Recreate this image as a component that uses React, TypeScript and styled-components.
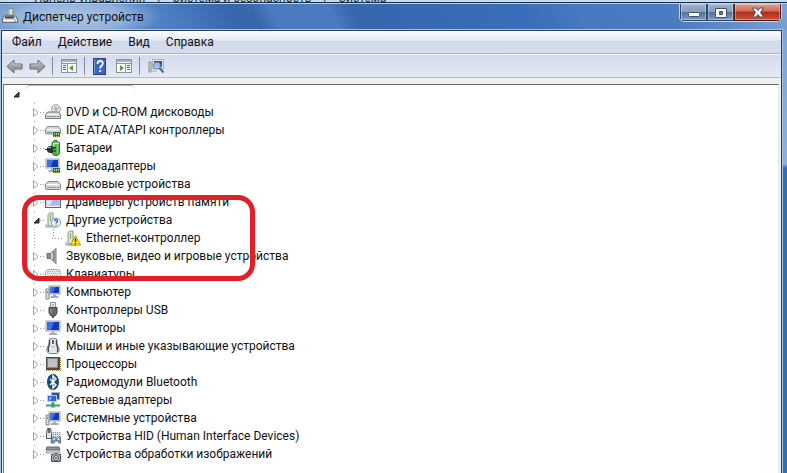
import React from "react";
import styled, { createGlobalStyle, css } from "styled-components";

const GlobalStyle = createGlobalStyle`
  * { box-sizing: border-box; }
  body {
    margin: 0;
    background: #3a6cb5;
    font-family: Roboto, "Noto Sans", sans-serif;
    font-size: 12px;
    color: #111;
  }
  button {
    font: inherit;
    color: inherit;
    border: 0;
    padding: 0;
    margin: 0;
    background: none;
  }
`;

const Desktop = styled.div`
  min-height: 100vh;
  display: flex;
  flex-direction: column;
`;

const BackStrip = styled.div`
  height: 3px;
  overflow: hidden;
  display: flex;
  align-items: flex-end;
  gap: 12px;
  padding-left: 34px;
  background: #c3dcf0;
  border-bottom: 1px solid #1b2c44;
  line-height: 8px;
  color: #233;
`;

const Window = styled.section`
  flex: 1;
  display: flex;
  flex-direction: column;
  padding: 0 5px 0 1px;
  border-top: 1px solid #b5d3f0;
  background: linear-gradient(180deg, #7ba0d3 0, #8fb0dc 160px, #3a6cb5 164px);
`;

const TitleBar = styled.header`
  height: 26px;
  margin: 0 -5px 0 -1px;
  padding: 0 5px 0 2px;
  display: flex;
  align-items: flex-start;
  background:
    radial-gradient(ellipse 90px 24px at 72px 13px, #b9cfebdd 0, #a4bfe3bb 60%, #a4bfe300 100%),
    linear-gradient(62deg, #6f97cf 0, #4f80c4 150px, #3967ac 210px, #3967ac 232px, #4a7ac0 248px, #4a7ac0 300px, #3766ae 320px, #3a6db9 470px, #4878c0 520px, #4b7bc2 600px, #7aa0d4 700px);
`;

const TitleIcon = styled.span`
  width: 20px;
  height: 24px;
  display: flex;
  align-items: center;
`;

const Title = styled.h1`
  flex: 1;
  margin: 0;
  font-size: 12px;
  font-weight: 400;
  line-height: 26px;
  padding-left: 1px;
`;

const WindowButtons = styled.div`
  display: flex;
  height: 18px;
  border: 1px solid #c8d9ee;
  border-top: 0;
  border-radius: 0 0 5px 5px;
  overflow: hidden;
`;

const WindowButton = styled.button<{ $close?: boolean }>`
  width: ${(p) => (p.$close ? 47 : 27)}px;
  display: flex;
  align-items: center;
  justify-content: center;
  border: 1px solid #30476b;
  border-top: 0;
  box-shadow: inset 0 0 0 1px #ffffff55;
  background: linear-gradient(#9ab1d0 0, #879fbe 48%, #53719c 52%, #7b9cc9 100%);
  ${(p) =>
    p.$close &&
    css`
      border-color: #4b1b1c;
      background: linear-gradient(#e4a193 0, #cd6856 45%, #b02b16 52%, #cb5639 100%);
    `}
`;

const Client = styled.main`
  flex: 1;
  display: flex;
  flex-direction: column;
  min-width: 0;
  border: 1px solid #263c5e;
  border-bottom: 0;
  outline: 1px solid #a9c3e4;
  background: #f0f0f0;
`;

const MenuBar = styled.nav`
  height: 23px;
  display: flex;
  align-items: center;
  gap: 16px;
  padding-left: 10px;
  background: linear-gradient(#fcfdff 0, #e6eaf6 9px, #d4daed 10px, #d5dcee 100%);
  border-bottom: 1px solid #acb2c0;
`;

const MenuItem = styled.button`
  line-height: 20px;
`;

const ToolBar = styled.div`
  height: 24px;
  display: flex;
  align-items: center;
  padding-left: 4px;
  background: linear-gradient(#d5dbed, #e4e9f5);
  border-top: 1px solid #f8faff;
  border-bottom: 1px solid #b6bac4;
`;

const ToolButton = styled.button`
  display: flex;
  width: 23px;
  justify-content: flex-start;
`;

const Divider = styled.span`
  width: 1px;
  height: 18px;
  margin: 0 8px 0 0;
  background: #858b98;
`;

const TreePanel = styled.div`
  position: relative;
  flex: 1;
  margin: 6px 2px 0 1px;
  border-top: 1px solid #63666b;
  border-left: 1px solid #70747b;
  border-right: 1px solid #e4e6ea;
  background: #fff;
`;

const Tree = styled.ul`
  list-style: none;
  margin: 0;
  padding: 0;
`;

const RootRow = styled.div`
  height: 18px;
  display: flex;
  align-items: center;
  padding-left: 9px;
`;

const RootName = styled.span`
  align-self: stretch;
  width: 110px;
  margin-left: 5px;
  border-top: 1px solid #a8bbd6;
  border-radius: 5px;
`;

const Group = styled.ul`
  list-style: none;
  margin: 0;
  padding: 0 0 0 29px;
`;

const Row = styled.li<{ $child?: boolean }>`
  height: 18px;
  display: flex;
  align-items: center;
  padding-left: ${(p) => (p.$child ? 19 : 0)}px;
  white-space: nowrap;
  background:
    ${(p) =>
      p.$child &&
      "repeating-linear-gradient(#9a9a9a 0 1px, transparent 1px 3px) 20px 0 / 1px 9px no-repeat,"}
    repeating-linear-gradient(#a5a5a5 0 1px, transparent 1px 3px) 1px 0 / 1px 100% no-repeat;
`;

const Expander = styled.button`
  display: flex;
  align-items: center;
  width: 7px;
  height: 13px;
  background: #fff;
`;

const Branch = styled.span<{ $long?: boolean }>`
  width: ${(p) => (p.$long ? 12 : 4)}px;
  height: 1px;
  margin-right: 1px;
  background: repeating-linear-gradient(90deg, #999 0 1px, transparent 1px 3px);
`;

const RowIcon = styled.span`
  display: flex;
  width: 17px;
`;

const RowLabel = styled.span`
  padding-left: 4px;
  line-height: 18px;
`;

const Highlight = styled.div`
  position: absolute;
  left: 18px;
  top: 110px;
  width: 233px;
  height: 86px;
  border: 5px solid #e31e26;
  border-radius: 17px;
  pointer-events: none;
`;

const Svg = ({ children, size = 16 }: { children: React.ReactNode; size?: number }) => (
  <svg width={size} height={size} viewBox="0 0 16 16" aria-hidden="true">
    {children}
  </svg>
);

const Drive = () => (
  <>
    <path d="M2.5 8h11l2 3v3.5H.5V11z" fill="#d5d8da" stroke="#74797c" />
    <path d="M2 10.5h12" stroke="#f7f7f7" />
    <path d="M2 12.5h9" stroke="#8f9496" />
    <path d="M12 12.5h2" stroke="#3aaa40" />
  </>
);

const Chip = () => (
  <>
    <rect x="8" y="10" width="7" height="5" fill="#257050" />
    <path d="M9.5 11v2M11.5 11v2M13.5 11v2" stroke="#a6d4ae" />
    <path d="M9 14.5h6" stroke="#d2c55a" strokeDasharray="1 1" />
  </>
);

const Screen = ({ x = 1, y = 1, w = 14, h = 10 }: { x?: number; y?: number; w?: number; h?: number }) => (
  <>
    <rect x={x} y={y} width={w} height={h} fill="#dadfe5" stroke="#9aa3ad" />
    <rect x={x + 1} y={y + 1} width={w - 2} height={h - 2} fill="#1237bd" />
    <path d={`M${x + 1} ${y + 1}h${w / 2}l-3 ${h - 2}h${3 - w / 2}z`} fill="#3f70e6" />
    <path d={`M${x + w / 2} ${y + h + 0.5}v2`} stroke="#aab0b7" strokeWidth="3" />
    <path d={`M${x + w / 2 - 4} ${y + h + 3}h8`} stroke="#8d969f" strokeWidth="1.5" />
  </>
);

const Tower = () => (
  <>
    <path d="M1 5h3v10H1z" fill="#dde1da" stroke="#828a83" />
    <path d="M2.5 7v2" stroke="#51ad45" />
  </>
);

const Unknown = () => (
  <>
    <path d="M3 2.5l2-1.5h3v13H3z" fill="#dce3dc" stroke="#8b958c" />
    <path d="M5.5 3v6" stroke="#70b56a" />
    <path d="M1 15h10M1 12v3" stroke="#929992" fill="none" />
  </>
);

const icons = {
  dvd: (
    <>
      <circle cx="11" cy="5" r="4.5" fill="#dfe4e3" stroke="#a1a7a7" />
      <path d="M11 5L9 1.5M11 5l3.5-2" stroke="#9acb9c" />
      <circle cx="11" cy="5" r="1.3" fill="#fff" stroke="#909797" />
      <Drive />
    </>
  ),
  ide: (
    <>
      <path d="M2.5 4.5h11l2 3v3.5q0 1-1 1h-13q-1 0-1-1V7.500z" fill="#d4d7d9" stroke="#8c9194" />
      <path d="M2 7.500h12" stroke="#fff" />
      <path d="M2 10.500h5" stroke="#858a8d" />
      <Chip />
    </>
  ),
  battery: (
    <>
      <path d="M7 2.500l2-1V.5h3v1l2.500 1v11l-2 2H9l-2-2z" fill="#4fb04a" stroke="#2f7a35" />
      <path d="M8 3.500h6M9 4v2" stroke="#c8edb7" strokeWidth="1.500" />
      <path d="M12.500 5v8" stroke="#8ed37f" />
      <path d="M2 8q1-2 3-2h2l1 2v4l-1 1H5q-2 0-3-2z" fill="#2c342c" />
      <path d="M8 8h3M8 11h3" stroke="#373d33" strokeWidth="1.500" />
      <path d="M3 7.500h3" stroke="#a7b4a2" />
      <path d="M0 9.500h2" stroke="#222" />
    </>
  ),
  video: (
    <>
      <Screen x={1} y={1} w={13} h={9} />
      <Chip />
    </>
  ),
  disk: (
    <>
      <path d="M3 5.500h10l2.500 3v4q0 1-1 1h-13q-1 0-1-1v-4z" fill="#d4d7d9" stroke="#85898c" />
      <path d="M2 8.500h12" stroke="#fff" />
      <path d="M2 11.500h9" stroke="#9b9fa1" />
      <path d="M12 11.500h2" stroke="#3aaa40" />
    </>
  ),
  memory: (
    <>
      <rect x=".5" y="2.500" width="15" height="11" fill="#c4cbe0" stroke="#5c6680" />
      <path d="M2 4h12v7H2z" fill="#aeb8dc" />
      <path d="M2 4h7L5 11H2z" fill="#dfe4f2" />
      <path d="M1 12.500h14" stroke="#f0f2f6" />
    </>
  ),
  other: (
    <>
      <Unknown />
      <circle cx="11" cy="10.500" r="4.500" fill="#f5f8fd" stroke="#7e93b7" />
      <path d="M9.500 9.200q0-1.500 1.600-1.500t1.500 1.300q0 .8-1.500 1.800v.7M11.100 12.500v1" stroke="#2b53a3" strokeWidth="1.300" fill="none" />
    </>
  ),
  warning: (
    <>
      <Unknown />
      <path d="M10.500 5.500l5 9.500h-10z" fill="#ffe227" stroke="#b89615" strokeLinejoin="round" />
      <path d="M10.500 8.500v3.500M10.500 13v1.200" stroke="#222" strokeWidth="1.400" />
    </>
  ),
  sound: (
    <>
      <path d="M2 5.500h3.500v5H2z" fill="#8d9296" stroke="#686d70" />
      <path d="M5.500 5.500L11 .5v15l-5.500-5z" fill="#bfc3c5" stroke="#777d80" />
      <path d="M9 3v10" stroke="#858b8e" strokeWidth="2" />
      <path d="M7 6v4" stroke="#e3e6e7" />
    </>
  ),
  keyboard: (
    <>
      <rect x=".5" y="3.500" width="15" height="8" rx="3" fill="#e8e9e9" stroke="#a8abac" />
      <path d="M3 5.500h11M2 7.500h12M5 9.500h7" stroke="#aaaeb1" strokeDasharray="1 1" />
    </>
  ),
  computer: (
    <>
      <Screen x={4} y={2} w={11} h={8} />
      <Tower />
    </>
  ),
  usb: (
    <>
      <path d="M5.500.5h5v5h-5z" fill="#e9ebec" stroke="#8d9193" />
      <path d="M7 3h2" stroke="#70777a" />
      <path d="M4 5.500h8v5.500l-2 3H6l-2-3z" fill="#63686c" stroke="#414649" />
      <path d="M6 7v4" stroke="#a6abae" />
      <path d="M8 14v2" stroke="#555" strokeWidth="2" />
    </>
  ),
  monitor: <Screen />,
  mouse: (
    <>
      <path d="M4.500 1q3.500-1.500 7 0l.5 5 2 4q1 5-3 5.500H5Q1 15 2 10l2-4z" fill="#e3e7eb" stroke="#7a838d" />
      <path d="M4.500 2v4.500Q2.500 10 3.500 14M11.500 2v4.500q2 3.500 1 7.500" fill="none" stroke="#3c4550" strokeWidth="1.300" />
      <path d="M8 2v4" stroke="#59636e" strokeWidth="2" />
      <path d="M6 9q2-1 4 0" fill="none" stroke="#a9b1b9" />
    </>
  ),
  cpu: (
    <>
      <rect x="1" y="1" width="14" height="13" fill="#4d4a46" />
      <rect x="2.500" y="2.500" width="10" height="9" fill="#bfc0bf" stroke="#878683" />
      <path d="M15.500 2v13M1 14.500h14" stroke="#a58234" strokeDasharray="1 1" />
    </>
  ),
  bluetooth: (
    <>
      <ellipse cx="8" cy="8" rx="6" ry="8" fill="#164b7d" />
      <path d="M5 5l6 6-3 3V2l3 3-6 6" fill="none" stroke="#fff" strokeWidth="1.400" />
    </>
  ),
  network: (
    <>
      <rect x="6.500" y=".5" width="8" height="7" fill="#2548c9" stroke="#a8b4c4" />
      <rect x="2.500" y="3.500" width="9" height="6" fill="#3461de" stroke="#c2cbd5" />
      <path d="M4 5h3L5 9H4z" fill="#8bb0fa" />
      <path d="M8 10v3M1 13.500h14" stroke="#3ba573" strokeWidth="2" />
      <path d="M6 11.500h4v4H6z" fill="#3fa676" />
    </>
  ),
  system: (
    <>
      <Screen x={4} y={2} w={11} h={9} />
      <Tower />
    </>
  ),
  hid: (
    <>
      <path d="M2.500.5h3l1 5v5h-5v-5z" fill="#dfe2e5" stroke="#4c535a" />
      <path d="M4 1v4" stroke="#394049" strokeWidth="1.500" />
      <path d="M7 4h9v5H7z" fill="#dde1e4" />
      <path d="M8 4.500h8M8 6.500h8M8 8.500h8" stroke="#8f969d" strokeDasharray="1 1" />
      <path d="M7 10q2-2 3 0h3q1-2 3 0v5h-2l-1-2h-3l-1 2H6z" fill="#7993ac" stroke="#58738d" />
      <circle cx="9" cy="11" r="1" fill="#e8f3fa" />
      <circle cx="13.500" cy="11" r="1" fill="#e8f3fa" />
    </>
  ),
  imaging: (
    <>
      <path d="M2 1h12l1 3H1z" fill="#88979f" stroke="#596a72" />
      <path d="M1 5h14v2H1z" fill="#dfe4e6" stroke="#9aa3a8" />
      <path d="M6.500 8.500h2l1-1h3l1 1h2v7h-9z" fill="#a4aaad" stroke="#4d565b" />
      <circle cx="11" cy="12" r="2.500" fill="#e6eaeb" stroke="#495157" />
      <circle cx="11" cy="12" r="1" fill="#405262" />
    </>
  ),
};

type IconName = keyof typeof icons;
type Device = { name: string; icon: IconName; children?: Device[] };

const devices: Device[] = [
  { name: "DVD и CD-ROM дисководы", icon: "dvd" },
  { name: "IDE ATA/ATAPI контроллеры", icon: "ide" },
  { name: "Батареи", icon: "battery" },
  { name: "Видеоадаптеры", icon: "video" },
  { name: "Дисковые устройства", icon: "disk" },
  { name: "Драйверы устройств памяти", icon: "memory" },
  { name: "Другие устройства", icon: "other", children: [{ name: "Ethernet-контроллер", icon: "warning" }] },
  { name: "Звуковые, видео и игровые устройства", icon: "sound" },
  { name: "Клавиатуры", icon: "keyboard" },
  { name: "Компьютер", icon: "computer" },
  { name: "Контроллеры USB", icon: "usb" },
  { name: "Мониторы", icon: "monitor" },
  { name: "Мыши и иные указывающие устройства", icon: "mouse" },
  { name: "Процессоры", icon: "cpu" },
  { name: "Радиомодули Bluetooth", icon: "bluetooth" },
  { name: "Сетевые адаптеры", icon: "network" },
  { name: "Системные устройства", icon: "system" },
  { name: "Устройства HID (Human Interface Devices)", icon: "hid" },
  { name: "Устройства обработки изображений", icon: "imaging" },
];

const Arrow = ({ open }: { open?: boolean }) => (
  <svg width="7" height="9" viewBox="0 0 7 9" aria-hidden="true">
    {open ? (
      <path d="M6 2v5H1z" fill="#444" stroke="#222" />
    ) : (
      <path d="M.5.500l4.500 4L.5 8.500z" fill="#fff" stroke="#a2a2a2" />
    )}
  </svg>
);

const Back = () => (
  <svg width="17" height="15" viewBox="0 0 17 15" aria-hidden="true">
    <path d="M1 7.500l7-6.500v4h8v5H8v4z" fill="#9b9d9f" stroke="#686b6e" strokeLinejoin="round" />
    <path d="M3 7l4-4v3h8" fill="none" stroke="#c8cacc" />
  </svg>
);

const Forward = () => (
  <svg width="17" height="15" viewBox="0 0 17 15" aria-hidden="true">
    <path d="M16 7.500L9 1v4H1v5h8v4z" fill="#9b9d9f" stroke="#686b6e" strokeLinejoin="round" />
    <path d="M14 7l-4-4v3H2" fill="none" stroke="#c8cacc" />
  </svg>
);

const Pane = ({ right }: { right?: boolean }) => (
  <svg width="17" height="14" viewBox="0 0 17 14" aria-hidden="true">
    <rect x=".5" y=".5" width="15" height="13" fill="#fbfcfd" stroke="#8b929a" />
    <path d="M1 2h14" stroke="#a8afb7" strokeWidth="2" />
    <path d="M1 4.500h14" stroke="#8b929a" />
    {right ? (
      <>
        <path d="M9.500 5v8" stroke="#949aa2" />
        <path d="M4 6l4 3-4 3z" fill="#43a63a" />
        <path d="M11 6.500h3M11 8.500h3M11 10.500h3" stroke="#5d6570" />
      </>
    ) : (
      <>
        <path d="M6.500 5v8" stroke="#949aa2" />
        <path d="M12 6L8 9l4 3z" fill="#43a63a" />
        <path d="M2 6.500h3M2 8.500h3M2 10.500h3" stroke="#5d6570" />
      </>
    )}
  </svg>
);

const Help = () => (
  <svg width="13" height="17" viewBox="0 0 13 17" aria-hidden="true">
    <rect x=".5" y=".5" width="12" height="16" fill="#3e65c1" stroke="#24418c" />
    <path d="M1.500 1v15" stroke="#7998dc" />
    <path d="M4.500 6q0-3 2.700-3t2.600 2.500q0 1.500-1.600 2.500-1 .7-1 2.500M7.200 12v2" fill="none" stroke="#fff" strokeWidth="1.800" />
  </svg>
);

const Scan = () => (
  <Svg>
    <path d="M1 4h2v10H1z" fill="#dce1d9" stroke="#848c82" />
    <rect x="4.500" y="1.500" width="11" height="9" fill="#e5e9ef" stroke="#aab2be" />
    <path d="M6 3h8v6H6z" fill="#1d48c4" />
    <circle cx="9" cy="7.500" r="3.500" fill="#bad9f7cc" stroke="#68798f" />
    <path d="M11.500 10l4 4.500" stroke="#5f6875" strokeWidth="2" />
    <path d="M4 13h5" stroke="#a8b0b9" />
  </Svg>
);

const ManagerIcon = () => (
  <Svg>
    <path d="M5 2l3-1.500h3V7H5z" fill="#e1e5df" stroke="#7c847d" />
    <path d="M7 2v4" stroke="#5b9d67" />
    <path d="M1.500 8h12l2 3v3.500H.5V11z" fill="#d6d9d9" stroke="#636b70" />
    <path d="M3 9.500h9" stroke="#3d474e" strokeWidth="2" />
    <path d="M1 12.500h14" stroke="#f8f8f8" />
    <path d="M12 13h2" stroke="#4b9a58" />
  </Svg>
);

function DeviceRow({ device, child }: { device: Device; child?: boolean }) {
  return (
    <>
      <Row $child={child}>
        {!child && (
          <Expander aria-label={device.name}>
            <Arrow open={Boolean(device.children)} />
          </Expander>
        )}
        <Branch $long={child} />
        <RowIcon>
          <Svg>{icons[device.icon]}</Svg>
        </RowIcon>
        <RowLabel>{device.name}</RowLabel>
      </Row>
      {device.children?.map((item) => (
        <DeviceRow key={item.name} device={item} child />
      ))}
    </>
  );
}

export default function App() {
  return (
    <Desktop>
      <GlobalStyle />
      <BackStrip aria-hidden="true">
        <span>Панель управления</span>
        <span>|</span>
        <span>Система и безопасность</span>
        <span>|</span>
        <span>Система</span>
      </BackStrip>
      <Window>
        <TitleBar>
          <TitleIcon>
            <ManagerIcon />
          </TitleIcon>
          <Title>Диспетчер устройств</Title>
          <WindowButtons>
            <WindowButton aria-label="Свернуть">
              <svg width="12" height="12" viewBox="0 0 12 12">
                <rect x=".5" y="6.500" width="11" height="4" rx="1" fill="#fff" stroke="#4a5261" />
              </svg>
            </WindowButton>
            <WindowButton aria-label="Развернуть">
              <svg width="12" height="11" viewBox="0 0 12 11">
                <path d="M.5 1.500h11v9H.5zM4.500 4.500v3h3v-3z" fill="#fff" fillRule="evenodd" stroke="#4a5261" />
              </svg>
            </WindowButton>
            <WindowButton $close aria-label="Закрыть">
              <svg width="12" height="11" viewBox="0 0 12 11">
                <path d="M.5 1h3.500l2 2.500L8 1h3.500L8.500 5.500l3 4.500H8L6 7.500 4 10H.5l3-4.500z" fill="#fff" stroke="#514c56" />
              </svg>
            </WindowButton>
          </WindowButtons>
        </TitleBar>
        <Client>
          <MenuBar>
            <MenuItem>Файл</MenuItem>
            <MenuItem>Действие</MenuItem>
            <MenuItem>Вид</MenuItem>
            <MenuItem>Справка</MenuItem>
          </MenuBar>
          <ToolBar>
            <ToolButton aria-label="Назад"><Back /></ToolButton>
            <ToolButton aria-label="Вперёд"><Forward /></ToolButton>
            <Divider />
            <ToolButton aria-label="Показать дерево консоли"><Pane /></ToolButton>
            <Divider />
            <ToolButton aria-label="Справка"><Help /></ToolButton>
            <ToolButton aria-label="Показать панель действий"><Pane right /></ToolButton>
            <Divider />
            <ToolButton aria-label="Обновить конфигурацию оборудования"><Scan /></ToolButton>
          </ToolBar>
          <TreePanel>
            <Tree>
              <li>
                <RootRow>
                  <Expander aria-label="Компьютер">
                    <Arrow open />
                  </Expander>
                  <RootName />
                </RootRow>
                <Group>
                  {devices.map((device) => (
                    <DeviceRow key={device.name} device={device} />
                  ))}
                </Group>
              </li>
            </Tree>
            <Highlight />
          </TreePanel>
        </Client>
      </Window>
    </Desktop>
  );
}
